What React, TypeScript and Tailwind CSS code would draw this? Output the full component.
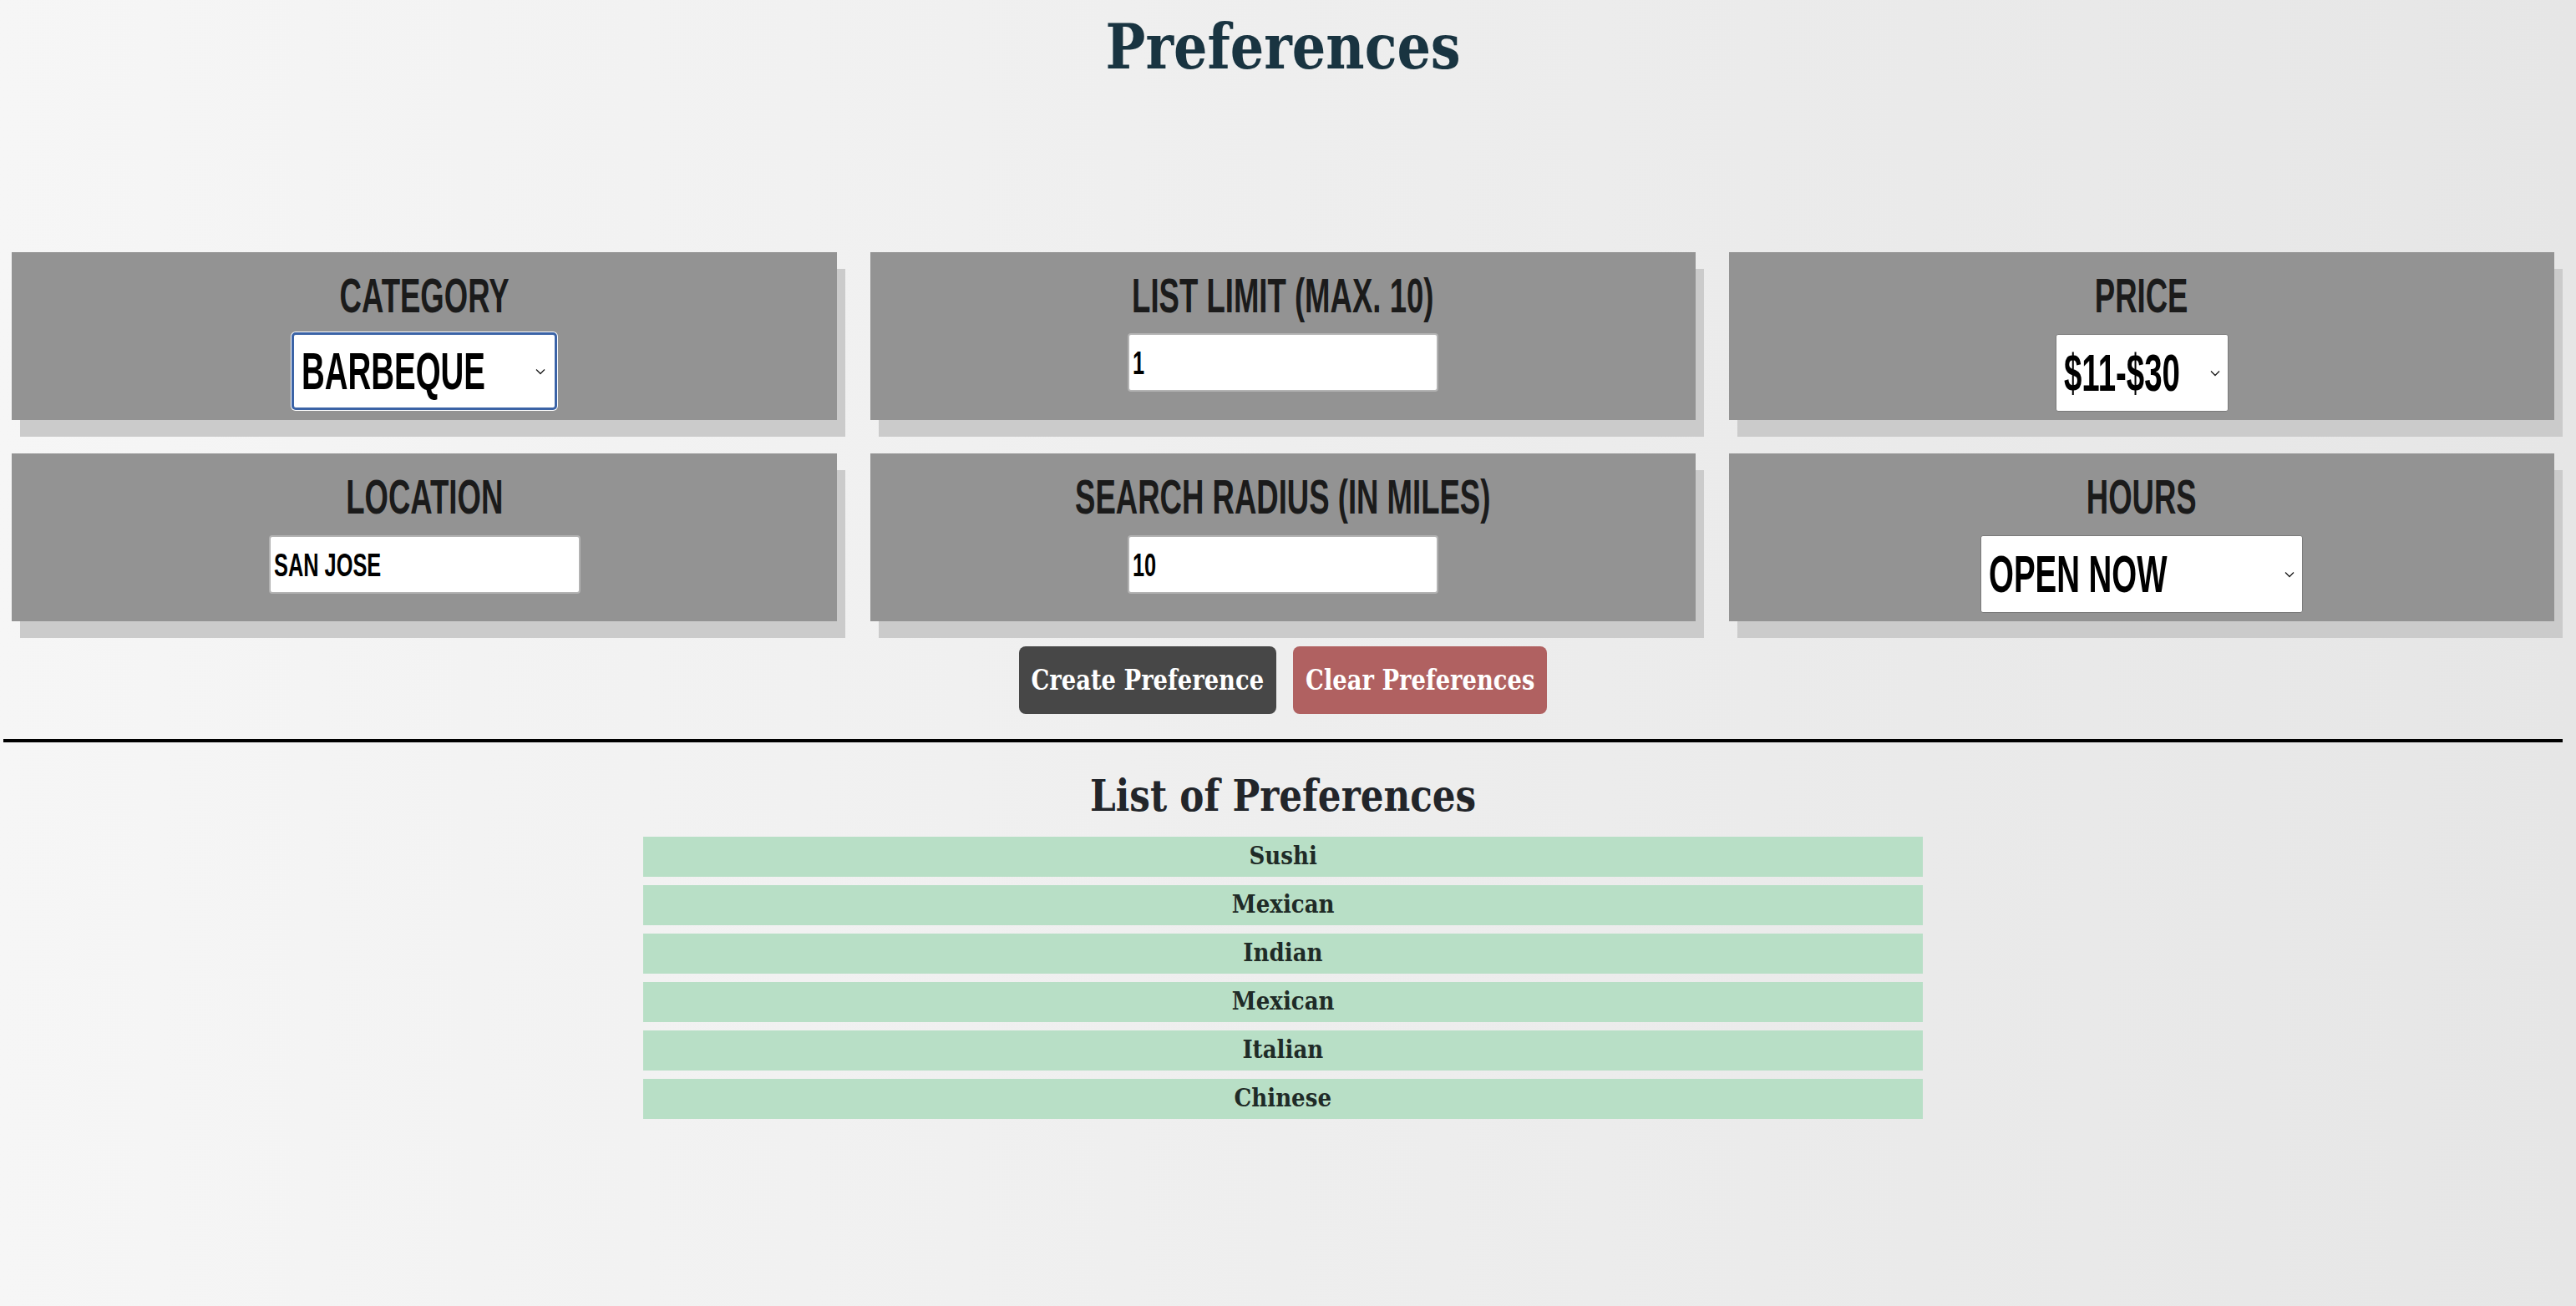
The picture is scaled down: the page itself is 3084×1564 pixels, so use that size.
const bebas = "font-['Liberation_Sans',Arial,sans-serif] font-bold uppercase";
const bree = "font-['DejaVu_Serif','Liberation_Serif',serif] font-bold";

const preferencias = ["Sushi", "Mexican", "Indian", "Mexican", "Italian", "Chinese"];

function Rotulo({ texto }: { texto: string }) {
  return (
    <label className={`${bebas} flex justify-center pt-[23px] text-[58px] leading-none text-[#1b1b1b]`}>
      <span className="inline-block scale-x-[0.63] whitespace-nowrap">{texto}</span>
    </label>
  );
}

function Seta({ posicao }: { posicao: string }) {
  return (
    <svg
      viewBox="0 0 12 8"
      className={`absolute top-1/2 h-[8px] w-[12px] -translate-y-1/2 ${posicao}`}
      fill="none"
      stroke="#1a1a1a"
      strokeWidth={1.3}
    >
      <path d="M1 1.5l5 5 5-5" />
    </svg>
  );
}

function Selecao({
  valor,
  largura,
  focado,
  seta,
}: {
  valor: string;
  largura: string;
  focado?: boolean;
  seta: string;
}) {
  return (
    <div
      role="combobox"
      className={`relative flex h-[93px] items-center overflow-hidden bg-white pl-[9px] ${largura} ${
        focado
          ? "rounded-[5px] border-[3px] border-[#3b63a6] ring-1 ring-white"
          : "rounded-[3px] border border-[#7a7a7a]"
      }`}
    >
      <span
        className={`${bebas} inline-block origin-left scale-x-[0.61] whitespace-nowrap text-[63px] leading-none text-black`}
      >
        {valor}
      </span>
      <Seta posicao={seta} />
    </div>
  );
}

function Campo({ valor, largura }: { valor: string; largura: string }) {
  return (
    <div
      className={`flex h-[70px] items-center overflow-hidden rounded-[4px] border-2 border-[#b3b3b3] bg-white pl-[4px] ${largura}`}
    >
      <span
        className={`${bebas} inline-block origin-left scale-x-[0.65] whitespace-nowrap text-[39px] leading-none text-black`}
      >
        {valor}
      </span>
    </div>
  );
}

function Painel({ children, largura }: { children: React.ReactNode; largura: string }) {
  return (
    <div className={`flex h-[201px] flex-col items-center bg-[#939393] shadow-[10px_20px_0_#cbcbcb] ${largura}`}>
      {children}
    </div>
  );
}

export default function App() {
  return (
    <div className="min-h-screen w-full bg-linear-to-r from-[#f6f6f6] to-[#e6e6e6]">
      <div className="w-[3072px]">
        <div className="h-[302px] pt-[19px]">
          <h1 className={`${bree} flex justify-center text-[74px] leading-none text-[#193441]`}>
            <span className="inline-block scale-x-[0.86]">Preferences</span>
          </h1>
        </div>

        <div className="flex flex-col gap-[40px] px-[14px]">
          <div className="flex gap-[40px]">
            <Painel largura="w-[988px]">
              <Rotulo texto="Category" />
              <div className="mt-[15px]">
                <Selecao valor="Barbeque" largura="w-[318px]" focado seta="right-[11px]" />
              </div>
            </Painel>
            <Painel largura="w-[988px]">
              <Rotulo texto="List Limit (max. 10)" />
              <div className="mt-[16px]">
                <Campo valor="1" largura="w-[372px]" />
              </div>
            </Painel>
            <Painel largura="w-[988px]">
              <Rotulo texto="Price" />
              <div className="mt-[17px]">
                <Selecao valor="$11-$30" largura="w-[207px]" seta="right-[9px]" />
              </div>
            </Painel>
          </div>

          <div className="flex gap-[40px]">
            <Painel largura="w-[988px]">
              <Rotulo texto="Location" />
              <div className="mt-[17px]">
                <Campo valor="San Jose" largura="w-[373px]" />
              </div>
            </Painel>
            <Painel largura="w-[988px]">
              <Rotulo texto="Search Radius (in miles)" />
              <div className="mt-[17px]">
                <Campo valor="10" largura="w-[372px]" />
              </div>
            </Painel>
            <Painel largura="w-[988px]">
              <Rotulo texto="Hours" />
              <div className="mt-[17px]">
                <Selecao valor="Open Now" largura="w-[386px]" seta="right-[9px]" />
              </div>
            </Painel>
          </div>
        </div>

        <div className="mt-[30px] flex justify-center gap-[20px]">
          <button
            className={`${bree} flex h-[81px] w-[308px] items-center justify-center rounded-[8px] bg-[#474747] text-[33px] text-white`}
          >
            <span className="inline-block scale-x-[0.83] whitespace-nowrap">Create Preference</span>
          </button>
          <button
            className={`${bree} flex h-[81px] w-[304px] items-center justify-center rounded-[8px] bg-[#b06161] text-[33px] text-white`}
          >
            <span className="inline-block scale-x-[0.83] whitespace-nowrap">Clear Preferences</span>
          </button>
        </div>

        <hr className="mx-[4px] mt-[30px] h-[4px] border-0 bg-black" />

        <h2 className={`${bree} mt-[38px] flex justify-center text-[52px] leading-none text-[#22252a]`}>
          <span className="inline-block scale-x-[0.84] whitespace-nowrap">List of Preferences</span>
        </h2>

        <ul className="mx-auto mt-[23px] flex w-[1532px] flex-col gap-[10px]">
          {preferencias.map((item, i) => (
            <li
              key={i}
              className={`${bree} flex h-[48px] items-center justify-center bg-[#b8dfc6] text-[29px] text-[#1f2b27]`}
            >
              <span className="inline-block scale-x-[0.9]">{item}</span>
            </li>
          ))}
        </ul>
      </div>
    </div>
  );
}
